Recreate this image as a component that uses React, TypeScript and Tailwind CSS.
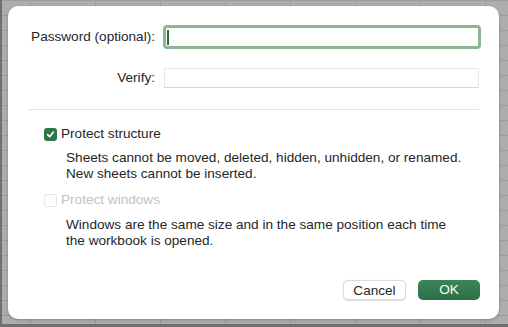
import React from 'react';

const font = { fontFamily: '"Liberation Sans", Arial, sans-serif' };

function Checkbox({ checked, disabled }: { checked?: boolean; disabled?: boolean }) {
  if (checked) {
    return (
      <div className="flex h-[13px] w-[13px] items-center justify-center rounded-[3px] bg-[#2f7549]">
        <svg width="9" height="9" viewBox="0 0 10 10" fill="none">
          <path d="M1.8 5.2 L4.1 7.5 L8.3 2.3" stroke="white" strokeWidth="1.8" strokeLinecap="round" strokeLinejoin="round" />
        </svg>
      </div>
    );
  }
  return (
    <div
      className={`h-[13px] w-[13px] rounded-[3px] border bg-white ${
        disabled ? 'border-[#e3e3e3]' : 'border-[#bdbdbd]'
      }`}
    />
  );
}

export default function App() {
  return (
    <div
      className="h-[327px] w-[508px] overflow-hidden border-b-[3px] border-l-2 border-[#6f6f6f] bg-[#adadad] bg-[linear-gradient(to_right,#9c9c9c_1px,transparent_1px),linear-gradient(to_bottom,#9c9c9c_1px,transparent_1px)] bg-[size:65px_15px] bg-[position:28px_0px] pl-[6px] pt-[6px] text-[13.6px] text-[#262626]"
      style={font}
    >
      <div className="flex h-[313px] w-[491px] flex-col rounded-[10px] bg-white shadow-[0_1px_3px_rgba(0,0,0,0.25)]">
        {/* password */}
        <div className="mt-[19px] flex items-center">
          <div className="w-[147px] text-right">Password (optional):</div>
          <div className="ml-[8px] flex h-[24px] w-[318px] items-center rounded-[4px] border-[3px] border-[#8db594] pl-[1px]">
            <div className="h-[15px] w-[2px] bg-[#2f6a43]" />
          </div>
        </div>

        {/* verify */}
        <div className="mt-[19px] flex items-center">
          <div className="w-[147px] text-right">Verify:</div>
          <div className="ml-[9px] h-[20px] w-[315px] border border-[#e8e8e8] border-b-[#d6d6d6] bg-white" />
        </div>

        <div className="mx-[20px] mt-[21px] h-px bg-[#e2e2e2]" />

        {/* protect structure */}
        <div className="ml-[36px] mt-[16px] flex h-[16px] items-center gap-[4px]">
          <Checkbox checked />
          <span>Protect structure</span>
        </div>
        <div className="ml-[58px] mt-[8px] leading-[16px]">
          <div>Sheets cannot be moved, deleted, hidden, unhidden, or renamed.</div>
          <div>New sheets cannot be inserted.</div>
        </div>

        {/* protect windows */}
        <div className="ml-[36px] mt-[10px] flex h-[16px] items-center gap-[4px] text-[#c2c2c2]">
          <Checkbox disabled />
          <span>Protect windows</span>
        </div>
        <div className="ml-[58px] mt-[9px] leading-[16px]">
          <div>Windows are the same size and in the same position each time</div>
          <div>the workbook is opened.</div>
        </div>

        {/* buttons */}
        <div className="mr-[19px] mt-[31px] flex justify-end gap-[12px]">
          <button className="h-[20px] w-[63px] rounded-[5px] border border-[#dcdcdc] bg-white text-[13.6px] text-[#262626] shadow-[0_0.5px_1px_rgba(0,0,0,0.15)]">
            Cancel
          </button>
          <button className="h-[20px] w-[62px] rounded-[5px] bg-[linear-gradient(to_bottom,#3a8658,#2d6f47)] text-[13.6px] text-white">
            OK
          </button>
        </div>
      </div>
    </div>
  );
}
